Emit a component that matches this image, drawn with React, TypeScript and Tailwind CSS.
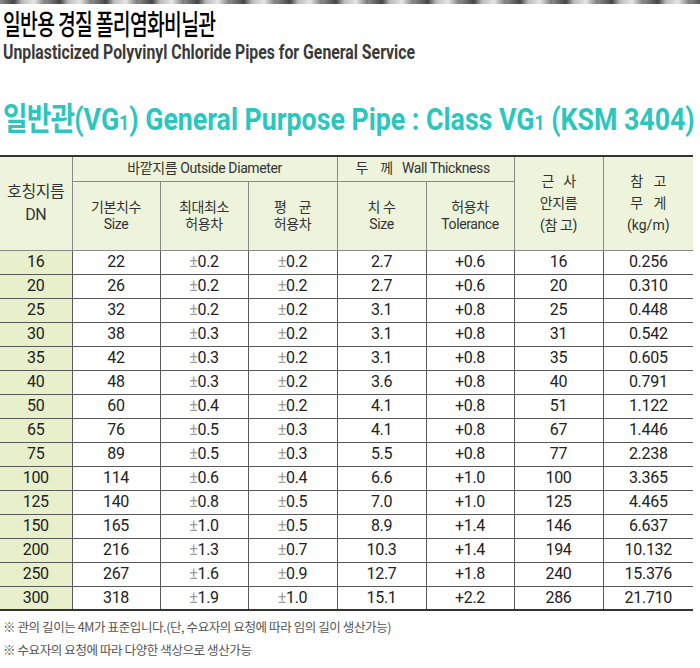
import React from 'react';

const rows = [
  ['16', '22', '0.2', '0.2', '2.7', '+0.6', '16', '0.256'],
  ['20', '26', '0.2', '0.2', '2.7', '+0.6', '20', '0.310'],
  ['25', '32', '0.2', '0.2', '3.1', '+0.8', '25', '0.448'],
  ['30', '38', '0.3', '0.2', '3.1', '+0.8', '31', '0.542'],
  ['35', '42', '0.3', '0.2', '3.1', '+0.8', '35', '0.605'],
  ['40', '48', '0.3', '0.2', '3.6', '+0.8', '40', '0.791'],
  ['50', '60', '0.4', '0.2', '4.1', '+0.8', '51', '1.122'],
  ['65', '76', '0.5', '0.3', '4.1', '+0.8', '67', '1.446'],
  ['75', '89', '0.5', '0.3', '5.5', '+0.8', '77', '2.238'],
  ['100', '114', '0.6', '0.4', '6.6', '+1.0', '100', '3.365'],
  ['125', '140', '0.8', '0.5', '7.0', '+1.0', '125', '4.465'],
  ['150', '165', '1.0', '0.5', '8.9', '+1.4', '146', '6.637'],
  ['200', '216', '1.3', '0.7', '10.3', '+1.4', '194', '10.132'],
  ['250', '267', '1.6', '0.9', '12.7', '+1.8', '240', '15.376'],
  ['300', '318', '1.9', '1.0', '15.1', '+2.2', '286', '21.710'],
];

const font = { fontFamily: '"Roboto", "Noto Sans CJK KR", sans-serif' };
const kr = { fontFamily: '"Noto Sans CJK KR", sans-serif' };

function PlusMinus({ v }: { v: string }) {
  return (
    <span>
      <span className="text-[#9a9a9a]">±</span>
      {v}
    </span>
  );
}

export default function App() {
  const th = 'border-r border-[#6b6b6b] font-normal text-[#333] text-[14px] leading-[17px] tracking-[-0.4px]';
  const td = 'border-r border-b border-[#5a5a5a] text-center text-[16px] leading-[20px] p-0 text-[#222] tracking-[-0.3px]';

  return (
    <div className="w-[700px] h-[668px] bg-white overflow-hidden" style={font}>
      <div className="h-[4px] w-full bg-[repeating-linear-gradient(90deg,#8a8a8a_0px,#444_14px,#bbb_22px,#e6e6e6_34px,#777_46px)]" />

      <div className="pl-[3px] pt-[3px]">
        <h1
          className="text-[28px] leading-[32px] font-medium text-black tracking-[-1px] whitespace-nowrap origin-left scale-x-[0.69]"
          style={kr}
        >
          일반용 경질 폴리염화비닐관
        </h1>
        <p className="text-[20px] leading-[26px] font-bold text-[#3a3a3a] whitespace-nowrap origin-left scale-x-[0.79]">
          Unplasticized Polyvinyl Chloride Pipes for General Service
        </p>
        <h2 className="mt-[33px] text-[32px] leading-[36px] font-bold text-[#2bc6bd] whitespace-nowrap origin-left scale-x-[0.835]">
          <span style={kr} className="font-bold tracking-[-1px]">일반관</span>
          (VG<span className="text-[21px]">1</span>) General Purpose Pipe : Class VG<span className="text-[21px]">1</span> (KSM 3404)
        </h2>
      </div>

      <table className="mt-[14px] w-[693px] border-collapse table-fixed">
        <colgroup>
          <col className="w-[72px]" />
          <col className="w-[88px]" />
          <col className="w-[88px]" />
          <col className="w-[89px]" />
          <col className="w-[89px]" />
          <col className="w-[88px]" />
          <col className="w-[89px]" />
          <col className="w-[90px]" />
        </colgroup>
        <thead className="bg-[#eef3dc]">
          <tr className="h-[25px] border-t-2 border-[#333]">
            <th rowSpan={2} className={`${th} text-[16px] leading-[23px] border-b border-[#8a8a8a]`}>
              <div>호칭지름</div>
              <div>DN</div>
            </th>
            <th colSpan={3} className={`${th} border-b border-[#8a8a8a]`}>바깥지름 Outside Diameter</th>
            <th colSpan={2} className={`${th} border-b border-[#8a8a8a] text-left pl-[18px]`}>
              두&nbsp;&nbsp;&nbsp;&nbsp;께&nbsp;&nbsp;&nbsp;Wall Thickness
            </th>
            <th rowSpan={2} className={`${th} border-b border-[#8a8a8a] leading-[22px]`}>
              <div>근&nbsp;&nbsp;&nbsp;사</div>
              <div>안지름</div>
              <div>(참 고)</div>
            </th>
            <th rowSpan={2} className="font-normal text-[#333] text-[14px] border-b border-[#8a8a8a] leading-[22px]">
              <div>참&nbsp;&nbsp;&nbsp;고</div>
              <div>무&nbsp;&nbsp;&nbsp;게</div>
              <div>(kg/m)</div>
            </th>
          </tr>
          <tr className="h-[69px]">
            <th className={`${th} border-b border-[#8a8a8a]`}>
              <div>기본치수</div>
              <div>Size</div>
            </th>
            <th className={`${th} border-b border-[#8a8a8a]`}>
              <div>최대최소</div>
              <div>허용차</div>
            </th>
            <th className={`${th} border-b border-[#8a8a8a]`}>
              <div>평&nbsp;&nbsp;&nbsp;&nbsp;균</div>
              <div>허용차</div>
            </th>
            <th className={`${th} border-b border-[#8a8a8a]`}>
              <div>치 수</div>
              <div>Size</div>
            </th>
            <th className={`${th} border-b border-[#8a8a8a]`}>
              <div>허용차</div>
              <div>Tolerance</div>
            </th>
          </tr>
        </thead>
        <tbody>
          {rows.map((r, i) => (
            <tr key={r[0]} className={`h-[24px] ${i === rows.length - 1 ? 'border-b-2 border-[#333]' : ''}`}>
              <td className={`${td} bg-[#e8efcb]`}>{r[0]}</td>
              <td className={td}>{r[1]}</td>
              <td className={td}><PlusMinus v={r[2]} /></td>
              <td className={td}><PlusMinus v={r[3]} /></td>
              <td className={td}>{r[4]}</td>
              <td className={td}>{r[5]}</td>
              <td className={td}>{r[6]}</td>
              <td className="border-b border-[#5a5a5a] text-center text-[16px] leading-[20px] p-0 text-[#222] tracking-[-0.3px]">{r[7]}</td>
            </tr>
          ))}
        </tbody>
      </table>

      <div className="pl-[3px] pt-[4px] text-[12.5px] text-[#555] leading-[23px] tracking-[-0.4px]" style={kr}>
        <p>※ 관의 길이는 4M가 표준입니다.(단, 수요자의 요청에 따라 임의 길이 생산가능)</p>
        <p>※ 수요자의 요청에 따라 다양한 색상으로 생산가능</p>
      </div>
    </div>
  );
}
